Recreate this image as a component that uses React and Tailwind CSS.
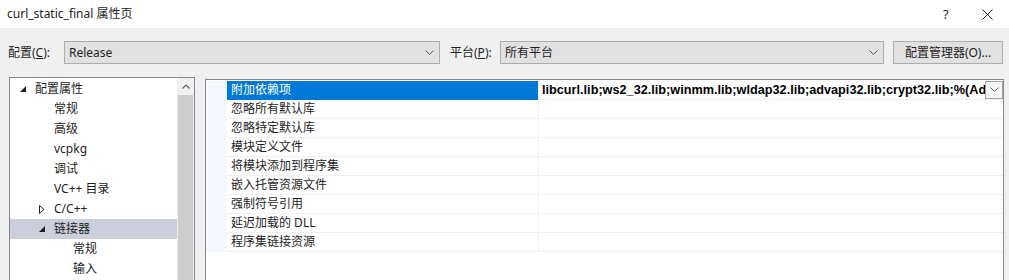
import React from "react";

const treeRows = [
  { label: "配置属性", level: 0, arrow: "open" },
  { label: "常规", level: 1 },
  { label: "高级", level: 1 },
  { label: "vcpkg", level: 1 },
  { label: "调试", level: 1 },
  { label: "VC++ 目录", level: 1 },
  { label: "C/C++", level: 1, arrow: "closed" },
  { label: "链接器", level: 1, arrow: "open", selected: true },
  { label: "常规", level: 2 },
  { label: "输入", level: 2 },
];

const indent = ["pl-[10px]", "pl-[29px]", "pl-[48px]"];

const props = [
  "附加依赖项",
  "忽略所有默认库",
  "忽略特定默认库",
  "模块定义文件",
  "将模块添加到程序集",
  "嵌入托管资源文件",
  "强制符号引用",
  "延迟加载的 DLL",
  "程序集链接资源",
];

function Chevron({ className = "" }) {
  return (
    <svg width="9" height="6" viewBox="0 0 9 6" className={className}>
      <path d="M0.5 0.5 L4.5 4.5 L8.5 0.5" fill="none" stroke="#606060" strokeWidth="1" />
    </svg>
  );
}

function Arrow({ type }) {
  if (type === "open")
    return (
      <svg width="6" height="6" viewBox="0 0 6 6">
        <path d="M6 0 L6 6 L0 6 Z" fill="#1e1e1e" />
      </svg>
    );
  if (type === "closed")
    return (
      <svg width="6" height="9" viewBox="0 0 6 9">
        <path d="M0.5 0.5 L5 4.5 L0.5 8.5 Z" fill="none" stroke="#1e1e1e" strokeWidth="1" />
      </svg>
    );
  return null;
}

function Combo({ value, width }) {
  return (
    <div className={`${width} h-[23px] flex items-center justify-between bg-[#e1e1e1] border border-[#adadad] pl-[4px] pr-[5px]`}>
      <span>{value}</span>
      <Chevron />
    </div>
  );
}

export default function App() {
  return (
    <div className="w-[1009px] h-[280px] overflow-hidden bg-[#f0f0f0] text-[12px] leading-[16px] text-[#1e1e1e] font-['Noto_Sans','Noto_Sans_CJK_SC',sans-serif] flex flex-col">
      {/* title bar */}
      <div className="h-[28px] bg-white flex items-center pl-[7px] shrink-0">
        <span className="flex-1">curl_static_final 属性页</span>
        <span className="text-[13px] w-[20px] mr-[19px]">?</span>
        <svg width="11" height="11" viewBox="0 0 11 11" className="mr-[16px]">
          <path d="M0.5 0.5 L10.5 10.5 M10.5 0.5 L0.5 10.5" stroke="#1e1e1e" strokeWidth="1" />
        </svg>
      </div>

      {/* config row */}
      <div className="flex items-center pt-[13px] shrink-0">
        <span className="w-[64px] pl-[8px] shrink-0">
          配置(<span className="underline">C</span>):
        </span>
        <Combo value="Release" width="w-[376px]" />
        <span className="w-[50px] ml-[10px] shrink-0">
          平台(<span className="underline">P</span>):
        </span>
        <Combo value="所有平台" width="w-[384px]" />
        <button className="ml-[9px] w-[110px] h-[23px] bg-[#e1e1e1] border border-[#adadad] flex items-center justify-center shrink-0">
          配置管理器(O)...
        </button>
      </div>

      {/* main */}
      <div className="flex items-start mt-[13px]">
        {/* tree */}
        <div className="ml-[9px] w-[186px] h-[230px] bg-white border border-[#828790] flex shrink-0">
          <div className="flex-1 pt-[1px]">
            {treeRows.map((r, i) => (
              <div
                key={i}
                className={`h-[20px] flex items-center ${indent[r.level]} ${r.selected ? "bg-[#cccedb]" : ""}`}
              >
                <span className="w-[15px] flex items-center">
                  <Arrow type={r.arrow} />
                </span>
                <span>{r.label}</span>
              </div>
            ))}
          </div>
          <div className="w-[17px] bg-[#f0f0f0] flex flex-col">
            <div className="h-[17px] flex items-center justify-center">
              <svg width="8" height="5" viewBox="0 0 8 5">
                <path d="M0.5 4.5 L4 1 L7.5 4.5" fill="none" stroke="#606060" strokeWidth="1.2" />
              </svg>
            </div>
            <div className="flex-1 mx-[1px] bg-[#cdcdcd]" />
          </div>
        </div>

        {/* property grid */}
        <div className="ml-[10px] mt-[2px] w-[799px] h-[230px] bg-white border border-[#828790] pt-[1px]">
          {props.map((p, i) => (
            <div key={i} className="flex h-[19px]">
              <div className="w-[21px] bg-[#f4f7fc]" />
              <div
                className={`w-[311px] pl-[4px] flex items-center border-b ${
                  i === 0 ? "bg-[#0078d7] text-white border-[#0078d7]" : "border-[#f0f0f0]"
                }`}
              >
                {p}
              </div>
              <div className="flex-1 flex items-center border-l border-b border-[#f0f0f0] min-w-0">
                {i === 0 && (
                  <>
                    <span className="flex-1 pl-[3px] overflow-hidden whitespace-nowrap font-bold text-[12.7px] font-['Liberation_Sans',sans-serif] text-black">
                      libcurl.lib;ws2_32.lib;winmm.lib;wldap32.lib;advapi32.lib;crypt32.lib;%(AdditionalDependencies)
                    </span>
                    <span className="w-[18px] h-[18px] border border-[#a0a0a0] bg-[#f5f5f5] flex items-center justify-center shrink-0">
                      <Chevron />
                    </span>
                  </>
                )}
              </div>
            </div>
          ))}
        </div>
      </div>
    </div>
  );
}
